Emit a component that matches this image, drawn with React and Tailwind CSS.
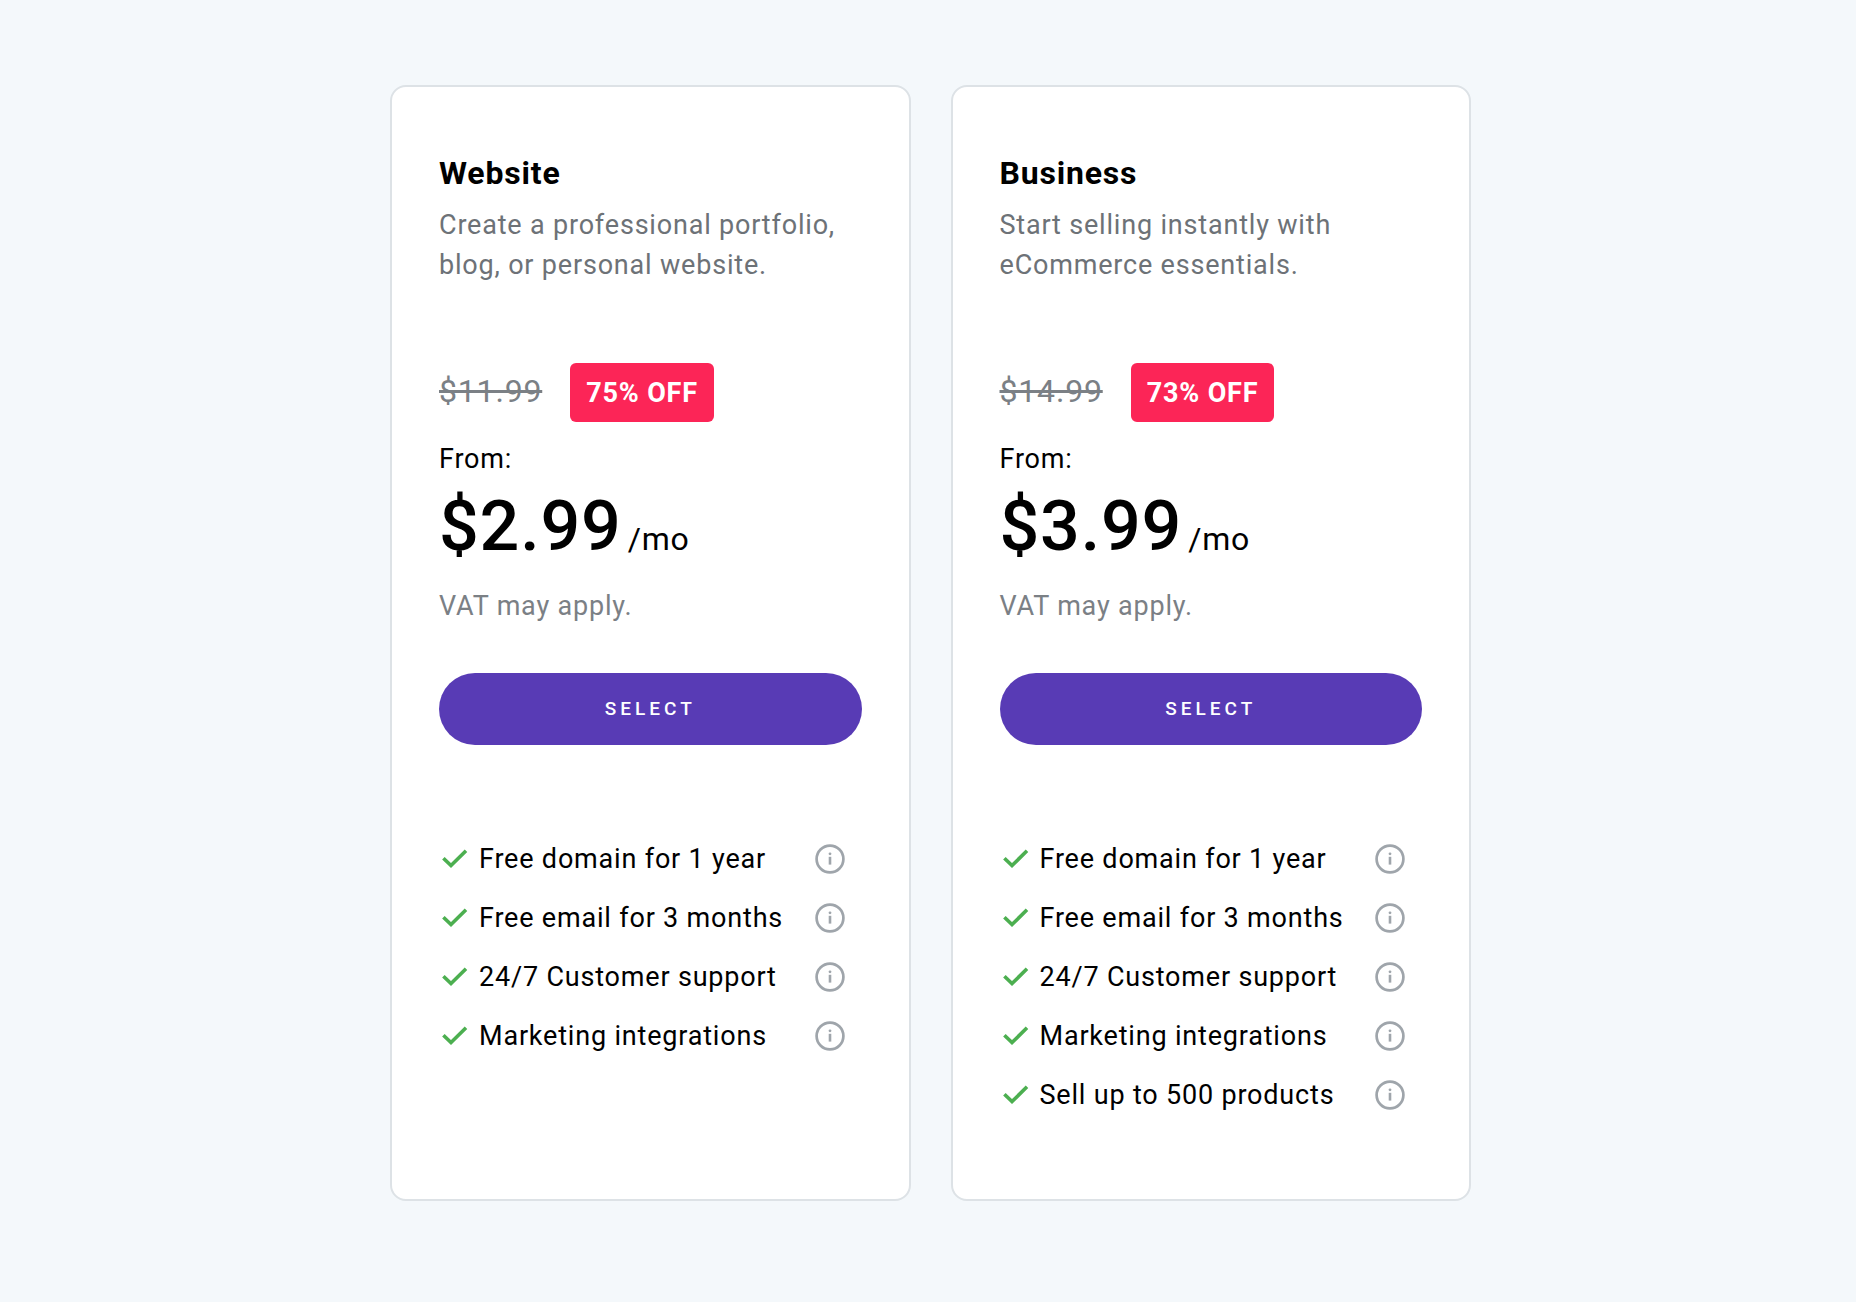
const plans = [
  {
    name: 'Website',
    description: 'Create a professional portfolio, blog, or personal website.',
    oldPrice: '$11.99',
    discount: '75% OFF',
    price: '$2.99',
    features: ['Free domain for 1 year', 'Free email for 3 months', '24/7 Customer support', 'Marketing integrations'],
  },
  {
    name: 'Business',
    description: 'Start selling instantly with eCommerce essentials.',
    oldPrice: '$14.99',
    discount: '73% OFF',
    price: '$3.99',
    features: [
      'Free domain for 1 year',
      'Free email for 3 months',
      '24/7 Customer support',
      'Marketing integrations',
      'Sell up to 500 products',
    ],
  },
];

function CheckIcon() {
  return (
    <svg className="h-8 w-8 shrink-0" viewBox="0 0 32 32" fill="none" aria-hidden="true">
      <path d="M4.4 15.2 12 22.6 27 7.8" stroke="#4caf50" strokeWidth="3.6" />
    </svg>
  );
}

function InfoIcon() {
  return (
    <svg className="h-8 w-8" viewBox="0 0 32 32" fill="none" aria-hidden="true">
      <circle cx="16" cy="16" r="13.4" stroke="#9fa5ab" strokeWidth="2.7" />
      <rect x="14.7" y="13.8" width="2.6" height="7.8" fill="#9fa5ab" />
      <circle cx="16" cy="10.8" r="1.4" fill="#9fa5ab" />
    </svg>
  );
}

function PlanCard({ plan }) {
  return (
    <section className="rounded-2xl border-2 border-[#dde2e6] bg-white px-[47px] pt-[66px] pb-[84px]">
      <h2 className="text-[32px] leading-10 font-bold">{plan.name}</h2>
      <p className="mt-3 text-[#6d7277]">{plan.description}</p>

      <div className="mt-[78px] flex items-baseline gap-7">
        <s className="text-[32px] leading-10 text-[#7b8085]">{plan.oldPrice}</s>
        <span className="rounded-md bg-[#fc2557] px-4 pt-[10px] pb-[9px] font-bold text-white">
          {plan.discount}
        </span>
      </div>

      <p className="mt-[17px]">From:</p>
      <p className="mt-[7px] flex items-baseline gap-1.5">
        <span className="text-[70px] leading-20 font-medium">{plan.price}</span>
        <span className="text-[32px] leading-10">/mo</span>
      </p>
      <p className="mt-5 text-[#7b8085]">VAT may apply.</p>

      <button
        type="button"
        className="mt-[47px] h-18 w-full rounded-full bg-[#583bb5] text-[19px] leading-6 font-medium tracking-[4px] text-white"
      >
        SELECT
      </button>

      <ul className="mt-[94px] flex flex-col gap-[19px]">
        {plan.features.map((feature) => (
          <li key={feature} className="flex items-center gap-2 pr-4">
            <CheckIcon />
            <span className="grow whitespace-nowrap">{feature}</span>
            <button type="button" aria-label={'About ' + feature}>
              <InfoIcon />
            </button>
          </li>
        ))}
      </ul>
    </section>
  );
}

export default function App() {
  return (
    <main className="min-h-screen bg-[#f4f8fb] pt-[85px] pb-[102px] pl-[5px] font-['Roboto',sans-serif] text-[27px] leading-10 tracking-[0.03em] text-black">
      <div className="mx-auto grid max-w-[1081px] grid-cols-2 gap-10">
        {plans.map((plan) => (
          <PlanCard key={plan.name} plan={plan} />
        ))}
      </div>
    </main>
  );
}
